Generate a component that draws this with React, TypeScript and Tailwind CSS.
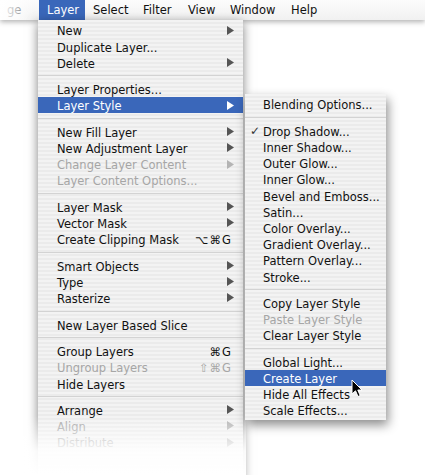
import type { ReactNode } from 'react'

type Row =
  | { sep: true }
  | {
      sep?: false
      label: string
      arrow?: boolean
      key?: string
      off?: boolean
      hot?: boolean
      check?: boolean
    }

const layerMenu: Row[] = [
  { label: 'New', arrow: true },
  { label: 'Duplicate Layer...' },
  { label: 'Delete', arrow: true },
  { sep: true },
  { label: 'Layer Properties...' },
  { label: 'Layer Style', arrow: true, hot: true },
  { sep: true },
  { label: 'New Fill Layer', arrow: true },
  { label: 'New Adjustment Layer', arrow: true },
  { label: 'Change Layer Content', arrow: true, off: true },
  { label: 'Layer Content Options...', off: true },
  { sep: true },
  { label: 'Layer Mask', arrow: true },
  { label: 'Vector Mask', arrow: true },
  { label: 'Create Clipping Mask', key: '⌥⌘G' },
  { sep: true },
  { label: 'Smart Objects', arrow: true },
  { label: 'Type', arrow: true },
  { label: 'Rasterize', arrow: true },
  { sep: true },
  { label: 'New Layer Based Slice' },
  { sep: true },
  { label: 'Group Layers', key: '⌘G' },
  { label: 'Ungroup Layers', key: '⇧⌘G', off: true },
  { label: 'Hide Layers' },
  { sep: true },
  { label: 'Arrange', arrow: true },
  { label: 'Align', arrow: true, off: true },
  { label: 'Distribute', arrow: true, off: true },
]

const styleMenu: Row[] = [
  { label: 'Blending Options...' },
  { sep: true },
  { label: 'Drop Shadow...', check: true },
  { label: 'Inner Shadow...' },
  { label: 'Outer Glow...' },
  { label: 'Inner Glow...' },
  { label: 'Bevel and Emboss...' },
  { label: 'Satin...' },
  { label: 'Color Overlay...' },
  { label: 'Gradient Overlay...' },
  { label: 'Pattern Overlay...' },
  { label: 'Stroke...' },
  { sep: true },
  { label: 'Copy Layer Style' },
  { label: 'Paste Layer Style', off: true },
  { label: 'Clear Layer Style' },
  { sep: true },
  { label: 'Global Light...' },
  { label: 'Create Layer', hot: true },
  { label: 'Hide All Effects' },
  { label: 'Scale Effects...' },
]

const stripes =
  'bg-[repeating-linear-gradient(180deg,#f3f3f3_0px,#f3f3f3_2px,#ebebeb_2px,#ebebeb_4px)]'

function Arrow({ color }: { color: string }) {
  return (
    <svg width="7" height="9" viewBox="0 0 7 9">
      <polygon points="0,0 7,4.5 0,9" fill={color} />
    </svg>
  )
}

function MenuRows({ rows, pad }: { rows: Row[]; pad: string }) {
  return (
    <>
      {rows.map((row, i) => {
        if (row.sep) {
          return (
            <div key={i} className="flex h-[10.3px] items-center">
              <div className="h-px w-full bg-[#d3d3d3]" />
            </div>
          )
        }
        const text = row.hot ? 'text-white' : row.off ? 'text-[#a6a6a6]' : 'text-[#111]'
        let right: ReactNode = null
        if (row.arrow) {
          right = <Arrow color={row.hot ? '#ffffff' : row.off ? '#b4b4b4' : '#555555'} />
        } else if (row.key) {
          right = <span className="mr-[2px] translate-y-[1.5px] tracking-[1px]">{row.key}</span>
        }
        return (
          <div
            key={i}
            className={`relative flex h-[16.2px] items-center justify-between pr-[9px] ${pad} ${text} ${
              row.hot ? 'bg-[#3a67ba]' : ''
            }`}
          >
            {row.check && (
              <span className="absolute left-[5px] top-[1px] text-[12px] font-bold leading-[16px] text-[#333]">
                ✓
              </span>
            )}
            <span className="translate-y-[1.5px] whitespace-nowrap">{row.label}</span>
            {right}
          </div>
        )
      })}
    </>
  )
}

export default function App() {
  return (
    <div
      className="relative h-[475px] w-[425px] overflow-hidden bg-white text-[11.5px] leading-none"
      style={{ fontFamily: '"DejaVu Sans", "Liberation Sans", sans-serif' }}
    >
      {/* menu bar */}
      <div className="relative z-10 flex h-[20px] items-stretch bg-gradient-to-b from-[#fcfcfc] to-[#f1f1f1] text-[#111] shadow-[0_2px_5px_rgba(0,0,0,0.3)]">
        <div className="flex w-[39px] items-center pl-[7px] pt-px">ge</div>
        <div className="flex w-[46px] items-center bg-[#3a67ba] pl-2 pt-px text-white">Layer</div>
        <div className="flex w-[50px] items-center pl-2 pt-px">Select</div>
        <div className="flex w-[45px] items-center pl-2 pt-px">Filter</div>
        <div className="flex w-[42px] items-center pl-2 pt-px">View</div>
        <div className="flex w-[61px] items-center pl-2 pt-px">Window</div>
        <div className="flex items-center pl-2 pt-px">Help</div>
        <div className="absolute inset-y-0 left-0 w-[34px] bg-gradient-to-r from-white via-white/70 to-transparent" />
      </div>

      {/* Layer menu */}
      <div
        className={`absolute left-[38px] top-[20px] z-20 w-[205px] pt-[2px] pb-[30px] ${stripes} shadow-[0_3px_10px_rgba(0,0,0,0.5)]`}
      >
        <MenuRows rows={layerMenu} pad="pl-[19px]" />
      </div>

      {/* fade at the bottom of the long menu */}
      <div className="absolute left-0 top-[416px] z-30 h-[59px] w-[246px] bg-gradient-to-b from-white/0 via-white/90 via-60% to-white" />

      {/* Layer Style submenu */}
      <div
        className={`absolute left-[245px] top-[94px] z-40 w-[141px] pt-[2px] pb-[2px] ${stripes} shadow-[2px_5px_10px_rgba(0,0,0,0.45)]`}
      >
        <MenuRows rows={styleMenu} pad="pl-[18px]" />
      </div>

      {/* pointer */}
      <svg
        className="absolute left-[351px] top-[379px] z-50"
        width="13"
        height="20"
        viewBox="0 0 13 20"
      >
        <path
          d="M1 1 L1 15 L4.5 11.8 L7 17.5 L9.2 16.5 L6.8 11 L11 11 Z"
          fill="#000"
          stroke="#fff"
          strokeWidth="1"
          strokeLinejoin="round"
        />
      </svg>
    </div>
  )
}
